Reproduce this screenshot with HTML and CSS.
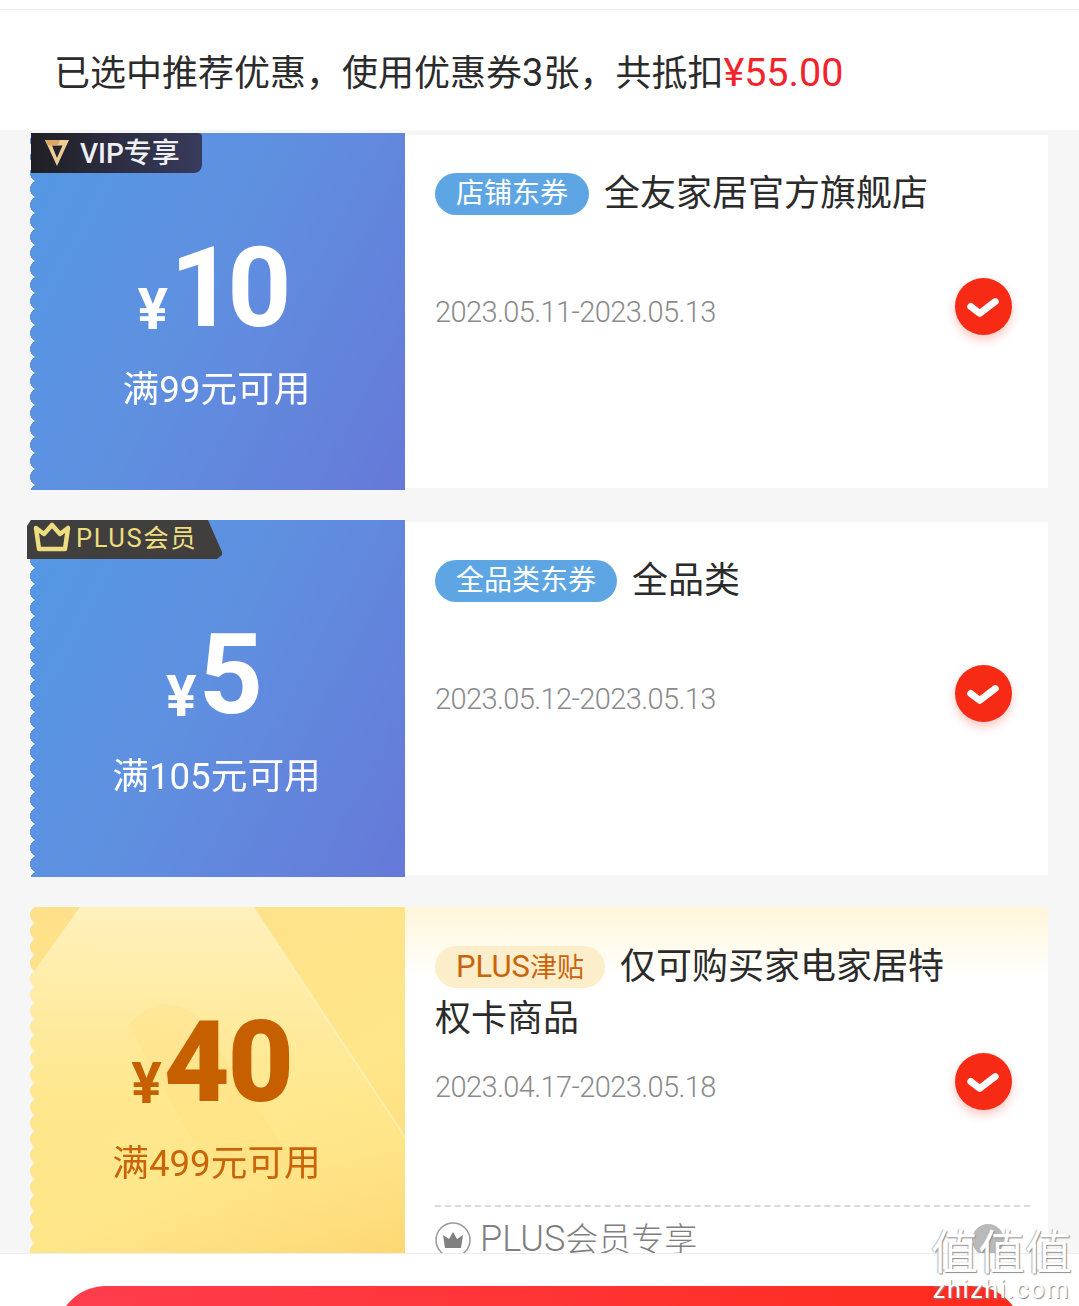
FILE: index.html
```html
<!DOCTYPE html>
<html lang="zh">
<head>
<meta charset="utf-8">
<title>优惠券</title>
<link rel="stylesheet" href="styles.css">
</head>
<body>
<div class="page">
  <header class="summary">
    <p class="summary-text">已选中推荐优惠，使用优惠券<span class="latin">3</span>张，共抵扣<span class="summary-total">¥55.00</span></p>
  </header>
  <main class="list">
    <article class="coupon">
      <div class="stub stub-blue">
        <div class="amount"><span class="yen">¥</span><span class="value">10</span></div>
        <div class="cond">满99元可用</div>
      </div>
      <div class="tag-vip">
        <svg class="vip-logo" viewBox="0 0 26 28"><path d="M1 1h24L13 27zM8 6.500l5 12.500 5.500-12.500z" fill="#f0cd96" fill-rule="evenodd"/><path d="M1 1h15l-2.500 5.500H3.500z" fill="#d9a763"/></svg>
        <span>VIP专享</span>
      </div>
      <div class="body">
        <div class="title"><span class="pill pill-blue">店铺东券</span><span class="title-text">全友家居官方旗舰店</span></div>
        <div class="row">
          <span class="date">2023.05.11-2023.05.13</span>
          <span class="check"><svg viewBox="0 0 58 58"><path d="M16 29l9 7 16-12" fill="none" stroke="#fff" stroke-width="7" stroke-linecap="round" stroke-linejoin="round"/></svg></span>
        </div>
      </div>
    </article>

    <article class="coupon">
      <div class="stub stub-blue">
        <div class="amount"><span class="yen">¥</span><span class="value">5</span></div>
        <div class="cond">满105元可用</div>
      </div>
      <div class="tag-plus">
        <svg class="crown" viewBox="0 0 38 30"><path d="M3 6l8 6 8-9 8 9 8-6-3 21H6z" fill="none" stroke="#eedd80" stroke-width="4.500" stroke-linejoin="round"/></svg>
        <span>PLUS会员</span>
      </div>
      <div class="body">
        <div class="title"><span class="pill pill-blue">全品类东券</span><span class="title-text">全品类</span></div>
        <div class="row">
          <span class="date">2023.05.12-2023.05.13</span>
          <span class="check"><svg viewBox="0 0 58 58"><path d="M16 29l9 7 16-12" fill="none" stroke="#fff" stroke-width="7" stroke-linecap="round" stroke-linejoin="round"/></svg></span>
        </div>
      </div>
    </article>

    <article class="coupon coupon-plus">
      <div class="stub stub-gold">
        <svg class="gold-art" viewBox="0 0 375 346" preserveAspectRatio="none">
          <defs>
            <linearGradient id="lg" x1="0" y1="0" x2="0" y2="1"><stop offset="0" stop-color="#fff1bd"/><stop offset="0.55" stop-color="#ffe88f" stop-opacity="0.8"/><stop offset="1" stop-color="#ffe88c" stop-opacity="0"/></linearGradient>
          </defs>
          <path d="M0 70L50 0H223L375 230V346H0z" fill="url(#lg)"/>
          <path d="M223 0L375 230" fill="none" stroke="#fff3c8" stroke-width="2" opacity=".6"/>
          <path d="M98 118q38-40 72-4l100 150H181z" fill="#ffdc7c" opacity=".25"/>
        </svg>
        <div class="amount amount-gold"><span class="yen">¥</span><span class="value">40</span></div>
        <div class="cond cond-gold">满499元可用</div>
      </div>
      <div class="body body-plus">
        <div class="title"><span class="pill pill-gold"><span class="pill-latin">PLUS</span>津贴</span><span class="title-text">仅可购买家电家居特</span><span class="title-line">权卡商品</span></div>
        <div class="row">
          <span class="date">2023.04.17-2023.05.18</span>
          <span class="check"><svg viewBox="0 0 58 58"><path d="M16 29l9 7 16-12" fill="none" stroke="#fff" stroke-width="7" stroke-linecap="round" stroke-linejoin="round"/></svg></span>
        </div>
        <div class="member">
          <div class="member-left">
            <svg class="member-icon" viewBox="0 0 36 36"><circle cx="18" cy="18" r="17" fill="#fff" stroke="#999" stroke-width="1.500"/><path d="M8 13l6 4 4-7 4 7 6-4-2 13H10z" fill="#808080"/></svg>
            <span class="member-text"><span class="member-latin">PLUS</span>会员专享</span>
          </div>
          <span class="member-more"></span>
        </div>
      </div>
    </article>
  </main>
  <footer class="bar"><div class="pay"></div></footer>
  <div class="watermark"><div class="wm-mark">值值值</div><div class="wm-url">zhizhi.com</div></div>
</div>
</body>
</html>
```

FILE: styles.css
```css
* { box-sizing: border-box; }
html, body { margin: 0; padding: 0; background: #fff; }
body { font-family: Roboto, "Noto Sans CJK SC", sans-serif; }
.page { position: relative; width: 1079px; height: 1306px; overflow: hidden; display: flex; flex-direction: column; }

.summary { height: 130px; padding-top: 9px; background: #fff; }
.summary-text { margin: 0; height: 121px; border-top: 1px solid #eeeeee; padding: 39px 0 0 54px; font-size: 36px; line-height: 48px; color: #2b2b2b; white-space: nowrap; }
.latin { font-size: 38px; }
.summary-total { color: #f2232b; font-size: 39.500px; }

.list { height: 1123px; overflow: hidden; background: #f6f6f6; padding: 3px 31px 0; display: flex; flex-direction: column; gap: 30px; flex: none; }
.coupon { position: relative; display: grid; grid-template-columns: 374px 643px; height: 357px; flex: none; }
.coupon-plus { height: 420px; }

.stub { position: relative; display: flex; flex-direction: column; align-items: center; padding-top: 95px; margin-left: -1px;
  -webkit-mask: linear-gradient(#000, #000) 7px 0 / 368px 100% no-repeat, radial-gradient(ellipse 8px 8.500px at 8px 8px, #000 98%, transparent 100%) 0 0 / 8px 16px repeat-y;
  mask: linear-gradient(#000, #000) 7px 0 / 368px 100% no-repeat, radial-gradient(ellipse 8px 8.500px at 8px 8px, #000 98%, transparent 100%) 0 0 / 8px 16px repeat-y; }
.stub-blue { background: linear-gradient(118deg, #5398e4 0%, #5f90e0 45%, #6679d8 100%); color: #fff; }
.stub-gold { background: linear-gradient(150deg, #ffe08a 0%, #ffe68a 55%, #fdd26c 100%); color: #c65f00; }
.gold-art { position: absolute; left: 0; top: 0; width: 375px; height: 346px; }

.amount { position: relative; display: flex; align-items: baseline; height: 120px; line-height: 120px; font-weight: 700; margin-left: -6px; }
.yen { font-size: 57px; margin-right: 2px; position: relative; top: 3px; }
.value { font-size: 112px; letter-spacing: -7px; font-weight: 700; margin-right: 7px; }
.amount-gold { margin-left: -10px; }
.amount-gold .yen { margin-right: 2px; top: 2px; }
.amount-gold .value { font-size: 114px; font-weight: 900; letter-spacing: -2px; margin-right: 2px; }
.cond { position: relative; margin: 18px 0 0 -2px; font-size: 36.700px; line-height: 48px; white-space: nowrap; }
.cond-gold { color: #c9640a; }

.tag-vip { position: absolute; left: 0; top: 0; width: 171px; height: 40px; display: flex; align-items: center; gap: 10px; padding: 0 0 4px 13px; background: linear-gradient(90deg, #1f1f24, #393b5e); border-radius: 0 4px 8px 0; color: #eef0f4; font-size: 28px; font-weight: 500; }
.vip-logo { width: 26px; height: 28px; flex: none; margin-top: 4px; }

.tag-plus { position: absolute; left: -4px; top: 0; width: 195px; height: 39px; display: flex; align-items: flex-start; gap: 5px; padding: 2px 0 0 6px; background: #403f3d; color: #eedd80; font-size: 25.500px; line-height: 33px; letter-spacing: 1.600px; clip-path: polygon(2% 0, 181px 0, 195px 32px, 195px 35px, 190px 39px, 0 39px, 0 6px); }
.crown { width: 38px; height: 30px; flex: none; }

.body { background: #fff; margin: 2px 0; padding: 37px 36px 0 30px; }
.body-plus { margin: 0; padding-top: 38px; padding-right: 18px; background: linear-gradient(180deg, #fff5da 0, #fffbee 40px, #fff 72px); }
.title { min-height: 104px; font-size: 36px; line-height: 52px; color: #2b2b2b; margin-top: -6px; }
.title-text { vertical-align: middle; margin-left: -1px; }
.title-line { display: block; }
.pill { display: inline-block; vertical-align: middle; height: 42px; line-height: 42px; padding: 0 21px; margin: -4px 16px -4px 0; border-radius: 21px; font-size: 28px; }
.pill-blue { background: #5ea6e3; color: #fff; }
.pill-gold { background: #fdeecb; color: #c9640a; font-size: 27px; }
.pill-latin { font-size: 31px; }

.row { display: flex; justify-content: space-between; align-items: center; height: 58px; margin-top: 7px; }
.date { font-size: 29px; font-weight: 300; color: #8a8a8a; letter-spacing: -0.600px; position: relative; top: 6px; }
.check { width: 57px; height: 57px; border-radius: 50%; background: #f72b15; box-shadow: 0 5px 10px rgba(247, 43, 21, .25); flex: none; }
.check svg { display: block; width: 57px; height: 57px; }
.body-plus .check { margin-right: 18px; }

.member { margin-top: 95px; border-top: 2px dashed #d9d9d9; padding-top: 14px; display: flex; justify-content: space-between; align-items: center; }
.member-left { display: flex; align-items: center; gap: 9px; color: #7f7f7f; line-height: 36px; }
.member-text { font-size: 33px; font-weight: 300; }
.member-latin { font-size: 36px; }
.member-icon { width: 36px; height: 36px; flex: none; }
.member-more { width: 32px; height: 32px; border-radius: 50%; background: #b9b9b9; margin-right: 26px; }

.bar { position: relative; flex: 1; background: #fff; border-top: 1px solid #eeeeee; padding: 32px 56px 0; overflow: hidden; }
.pay { height: 100px; border-radius: 50px; background: linear-gradient(90deg, #ff3d4e, #ff2b1c); }

.watermark { position: absolute; left: 929px; top: 1228px; width: 145px; text-align: center; color: #fff; pointer-events: none; }
.wm-mark { height: 50px; font-size: 47px; line-height: 50px; color: #fff; text-shadow: 1px 1px 1px #8c8c8c, -1px 0 1px #b4b4b4; white-space: nowrap; }
.wm-url { height: 24px; font-size: 25px; line-height: 24px; color: #fff; text-shadow: 1px 1px 1px #8c8c8c; letter-spacing: 1.700px; white-space: nowrap; }
```
